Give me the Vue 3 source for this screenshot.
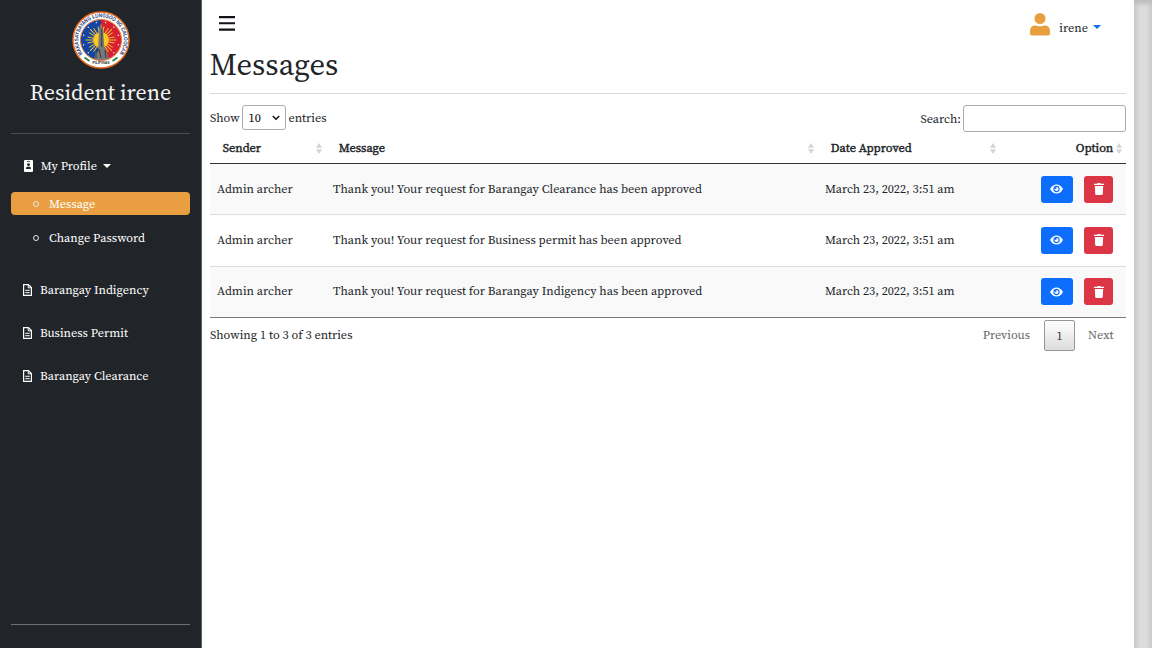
<script setup>
const requests = ['Barangay Indigency', 'Business Permit', 'Barangay Clearance']
const rows = ['Barangay Clearance', 'Business permit', 'Barangay Indigency']
const headings = ['Sender', 'Message', 'Date Approved', 'Option']
const rays = [0, 45, 90, 135, 180, 225, 270, 315]
const stars = [0, 30, 60, 90, 120, 150, 180, 210, 240, 270, 300, 330]
</script>

<template>
  <div class="app">
    <aside class="sidebar">
      <svg class="seal" viewBox="0 0 58 58">
        <defs>
          <path id="arc" d="M11.5 43.7 A22.8 22.8 0 1 1 46.5 43.7" />
          <clipPath id="disc"><circle cx="29" cy="29" r="20.3" /></clipPath>
        </defs>
        <circle cx="29" cy="29" r="28" fill="#fff" stroke="#e66a20" stroke-width="1.5" />
        <g clip-path="url(#disc)">
          <rect x="8" y="8" width="21" height="42" fill="#1245a2" />
          <rect x="29" y="8" width="21" height="42" fill="#d71f30" />
          <g v-for="r in stars" :key="r" :transform="`rotate(${r + 15} 29 29)`">
            <circle cx="29" cy="11" r=".75" fill="#dfe6f2" />
          </g>
          <g v-for="r in rays" :key="r" :transform="`rotate(${r} 29 29)`" stroke="#f0bd35" stroke-width="1">
            <path d="M29 22V13.5M27.2 22L26 15.5M30.8 22L32 15.5" />
          </g>
          <circle cx="29" cy="29" r="7.8" fill="#fcc91e" />
          <path d="M22 49L23.5 41H26L27 18L29 14L31 18L32.3 35L35 41L37 49Z" fill="#77797a" />
          <path d="M24 47V42L27 38L29 47M33 39L34 47M29.7 18V36" stroke="#333b40" fill="none" />
        </g>
        <circle cx="29" cy="29" r="20.6" fill="none" stroke="#ee7431" stroke-width="1" />
        <path d="M12.5 46.5L17.5 50M45.5 46.5L40.5 50" stroke="#288a48" stroke-width="2" />
        <text class="seal-text"><textPath href="#arc" startOffset="1" textLength="100" lengthAdjust="spacingAndGlyphs">MAKASAYSAYANG LUNGSOD NG CALOOCAN</textPath></text>
        <text class="seal-base" x="29" y="53" text-anchor="middle">PILIPINAS</text>
      </svg>
      <h2 class="who">Resident irene</h2>
      <hr class="rule" />
      <nav>
        <a class="profile">
          <svg width="9" height="12" viewBox="0 0 9 12"><path fill="#fff" fill-rule="evenodd" d="M1 0H8Q9 0 9 1V11Q9 12 8 12H1Q0 12 0 11V1Q0 0 1 0ZM3 1V1.7H6V1ZM4.5 3.2A1.45 1.45 0 1 0 4.5 6.1A1.45 1.45 0 1 0 4.5 3.2ZM2 9H7Q7 6.8 5.7 6.8H3.3Q2 6.8 2 9Z" /></svg>
          <span>My Profile</span><i class="caret"></i>
        </a>
        <a class="sub active"><i class="dot"></i><span>Message</span></a>
        <a class="sub"><i class="dot"></i><span>Change Password</span></a>
        <div class="requests">
          <a v-for="r in requests" :key="r" class="request">
            <svg width="9" height="12" viewBox="0 0 9 12" fill="none" stroke="#fff"><path stroke-width="1.2" d="M.6 .6H5.4L8.4 3.6V11.4H.6Z" /><path d="M5.2 .8V3.8H8.2M2.3 6.3H6.7M2.3 8.7H6.7" /></svg>
            <span>{{ r }}</span>
          </a>
        </div>
      </nav>
      <hr class="rule bottom" />
    </aside>

    <main class="main">
      <header class="top">
        <svg class="burger" width="16" height="15" viewBox="0 0 16 15"><path d="M0 1.1H16M0 7.3H16M0 13.6H16" stroke="#111418" stroke-width="2.1" /></svg>
        <div class="user">
          <svg width="20" height="23" viewBox="0 0 20 23" fill="#e89f3f"><circle cx="10" cy="5.5" r="5.5" /><path d="M4.5 12.4Q7 12.4 7.8 12.9Q10 13.6 12.2 12.9Q13 12.4 15.5 12.4Q20 13 20 18V20Q20 22.5 17.5 22.5H2.5Q0 22.5 0 20V18Q0 13 4.5 12.4Z" /></svg>
          <span>irene</span><i class="caret"></i>
        </div>
      </header>
      <h1>Messages</h1>
      <div class="controls">
        <div class="length"><span>Show</span>
          <div class="select"><span>10</span><svg width="8" height="6" viewBox="0 0 8 6"><path d="M.8 1L4 4.2L7.2 1" fill="none" stroke="#111" stroke-width="1.5" /></svg></div>
          <span>entries</span>
        </div>
        <div class="search"><span>Search:</span><input type="text" aria-label="Search" /></div>
      </div>
      <table>
        <colgroup><col class="c1" /><col class="c2" /><col class="c3" /><col class="c4" /></colgroup>
        <thead>
          <tr>
            <th v-for="h in headings" :key="h">
              <div class="head" :class="{ last: h === 'Option' }"><span>{{ h }}</span>
                <svg width="6" height="11" viewBox="0 0 6 11" fill="#d5d5d5"><path d="M0 4.7L3 0L6 4.7ZM0 6.2H6L3 11Z" /></svg>
              </div>
            </th>
          </tr>
        </thead>
        <tbody>
          <tr v-for="r in rows" :key="r">
            <td>Admin archer</td>
            <td>Thank you! Your request for {{ r }} has been approved</td>
            <td class="date">March 23, 2022, 3:51 am</td>
            <td>
              <div class="actions">
                <button class="view" aria-label="View"><svg width="13" height="10" viewBox="0 0 13 10"><path d="M0 5Q2.5 .5 6.5 .5T13 5Q10.5 9.5 6.5 9.5T0 5Z" fill="#fff" /><circle cx="6.5" cy="5" r="2.6" fill="#fff" stroke="#0d6efd" stroke-width="1.1" /><circle cx="5.6" cy="4.1" r="1" fill="#0d6efd" /></svg></button>
                <button class="del" aria-label="Delete"><svg width="10" height="12" viewBox="0 0 10 12" fill="#fff"><path d="M0 .8H3L3.5 0H6.5L7 .8H10V2.1H0ZM.8 3H9.2L8.8 10.8Q8.7 12 7.6 12H2.4Q1.3 12 1.2 10.8Z" /></svg></button>
              </div>
            </td>
          </tr>
        </tbody>
      </table>
      <footer>
        <span class="info">Showing 1 to 3 of 3 entries</span>
        <div class="pager"><span>Previous</span><b>1</b><span>Next</span></div>
      </footer>
    </main>
    <div class="gutter"></div>
  </div>
</template>

<style>
body { margin: 0; overflow: hidden; }
</style>

<style scoped>
* { box-sizing: border-box; }
.app { display: flex; width: 1152px; height: 648px; overflow: hidden; background: #fff; font: 12.27px/16px "Source Serif 4", "Source Serif Pro", "Liberation Serif", serif; color: #212529; }
h1, h2 { margin: 0; font-weight: 400; }
.sidebar { width: 202px; flex: none; background: #212529; border-right: 1px solid #5c6265; color: #fff; padding: 11px 11px 0; display: flex; flex-direction: column; height: 648px; }
.seal { width: 58px; height: 58px; display: block; margin-left: 60.5px; flex: none; }
.seal-text { font: bold 5.6px "Liberation Sans", sans-serif; fill: #243b78; }
.seal-base { font: bold 3.5px "Liberation Sans", sans-serif; fill: #333; }
.who { font-size: 21.9px; line-height: 28px; margin-top: 9px; text-align: center; white-space: nowrap; color: #f5f5f5; }
.rule { width: 179px; height: 1px; border: 0; background: #4b4f53; margin: 27px 0 0; flex: none; }
.rule.bottom { margin: auto 0 23px; background: #6b7073; }
a { display: flex; align-items: center; white-space: nowrap; }
.profile { margin-top: 21px; height: 22px; padding-left: 12.5px; gap: 8.3px; }
.caret { border: 4px solid transparent; border-top-color: currentColor; border-bottom: 0; }
.profile .caret { margin-left: -2.5px; }
.sub { height: 23px; padding-left: 22px; }
.sub .dot { width: 6px; height: 6px; border: 1px solid #e8e8e8; border-radius: 50%; margin-right: 10px; }
.sub.active { background: #e99f41; border-radius: 4px; margin: 15px 0 11px; width: 179px; }
.requests { display: flex; flex-direction: column; gap: 21px; margin-top: 30px; }
.request { height: 22px; padding-left: 11.5px; gap: 8.5px; }
.main { width: 932px; flex: none; padding: 0 8px; }
.top { height: 45px; display: flex; justify-content: space-between; }
.burger { margin: 16px 0 0 9px; }
.user { display: flex; margin: 13px 25px 0 0; height: 23px; }
.user span { margin: 7px 5px 0 9.5px; }
.user .caret { color: #0d6efd; margin-top: 12px; }
h1 { font-size: 30.6px; line-height: 38px; height: 49px; border-bottom: 1px solid #d9dadb; text-indent: -.5px; }
.controls { display: flex; justify-content: space-between; height: 39px; padding-top: 11px; }
.length { display: flex; align-items: center; height: 25px; gap: 2.4px; }
.select { width: 44px; height: 25px; border: 1px solid #aaa; border-radius: 3px; display: flex; align-items: center; justify-content: space-between; padding: 0 5px 0 5.5px; color: #000; }
.search { display: flex; align-items: center; height: 27px; gap: 2px; }
input { width: 163px; height: 27px; border: 1px solid #aaa; border-radius: 3px; background: #fff; padding: 0; }
table { width: 916px; table-layout: fixed; border-collapse: separate; border-spacing: 0; border-bottom: 1px solid #77797b; }
.c1 { width: 116px; } .c2 { width: 492px; } .c3 { width: 182px; } .c4 { width: 126px; }
th, td { padding: 0; text-align: left; white-space: nowrap; }
th { height: 31px; border-bottom: 1px solid #333; font-weight: 400; -webkit-text-stroke: .4px #212529; }
.head { display: flex; align-items: center; justify-content: space-between; padding: 0 3.7px 0 12.7px; }
.head.last { justify-content: flex-end; gap: 3px; }
td { height: 51px; padding-left: 7px; border-bottom: 1px solid #ddd; }
.date { letter-spacing: -.03px; }
tbody tr:nth-child(odd) td { background: #f9f9f9; }
tbody tr:nth-child(2) td { height: 52px; padding-bottom: 1px; }
tbody tr:last-child td { border-bottom: 0; height: 50px; padding-bottom: 1px; }
tbody tr:last-child td:not(:last-child) { padding-bottom: 2px; }
.actions { display: flex; gap: 11.5px; justify-content: flex-end; padding-right: 13px; }
button { border: 0; border-radius: 3px; height: 27px; padding: 0; display: flex; align-items: center; justify-content: center; }
.view { width: 31.3px; background: #0d6efd; } .del { width: 29px; background: #dc3545; }
footer { display: flex; justify-content: space-between; padding-top: 2px; }
.info { margin-top: 7px; }
.pager { display: flex; align-items: center; height: 31px; padding-right: 12.4px; color: #666; }
.pager span { margin-bottom: 1px; }
.pager b { width: 31px; height: 31px; border: 1px solid #979797; border-radius: 2px; background: linear-gradient(#fff, #dcdcdc); display: flex; align-items: center; justify-content: center; margin: 0 13px 0 14px; color: #333; font-weight: 400; }
.gutter { width: 18px; flex: none; background: linear-gradient(#bbb, transparent 7px), linear-gradient(90deg, #c9c9c9, #dcdcdc 6px, #dcdcdc 12px, #cacaca); }
</style>
